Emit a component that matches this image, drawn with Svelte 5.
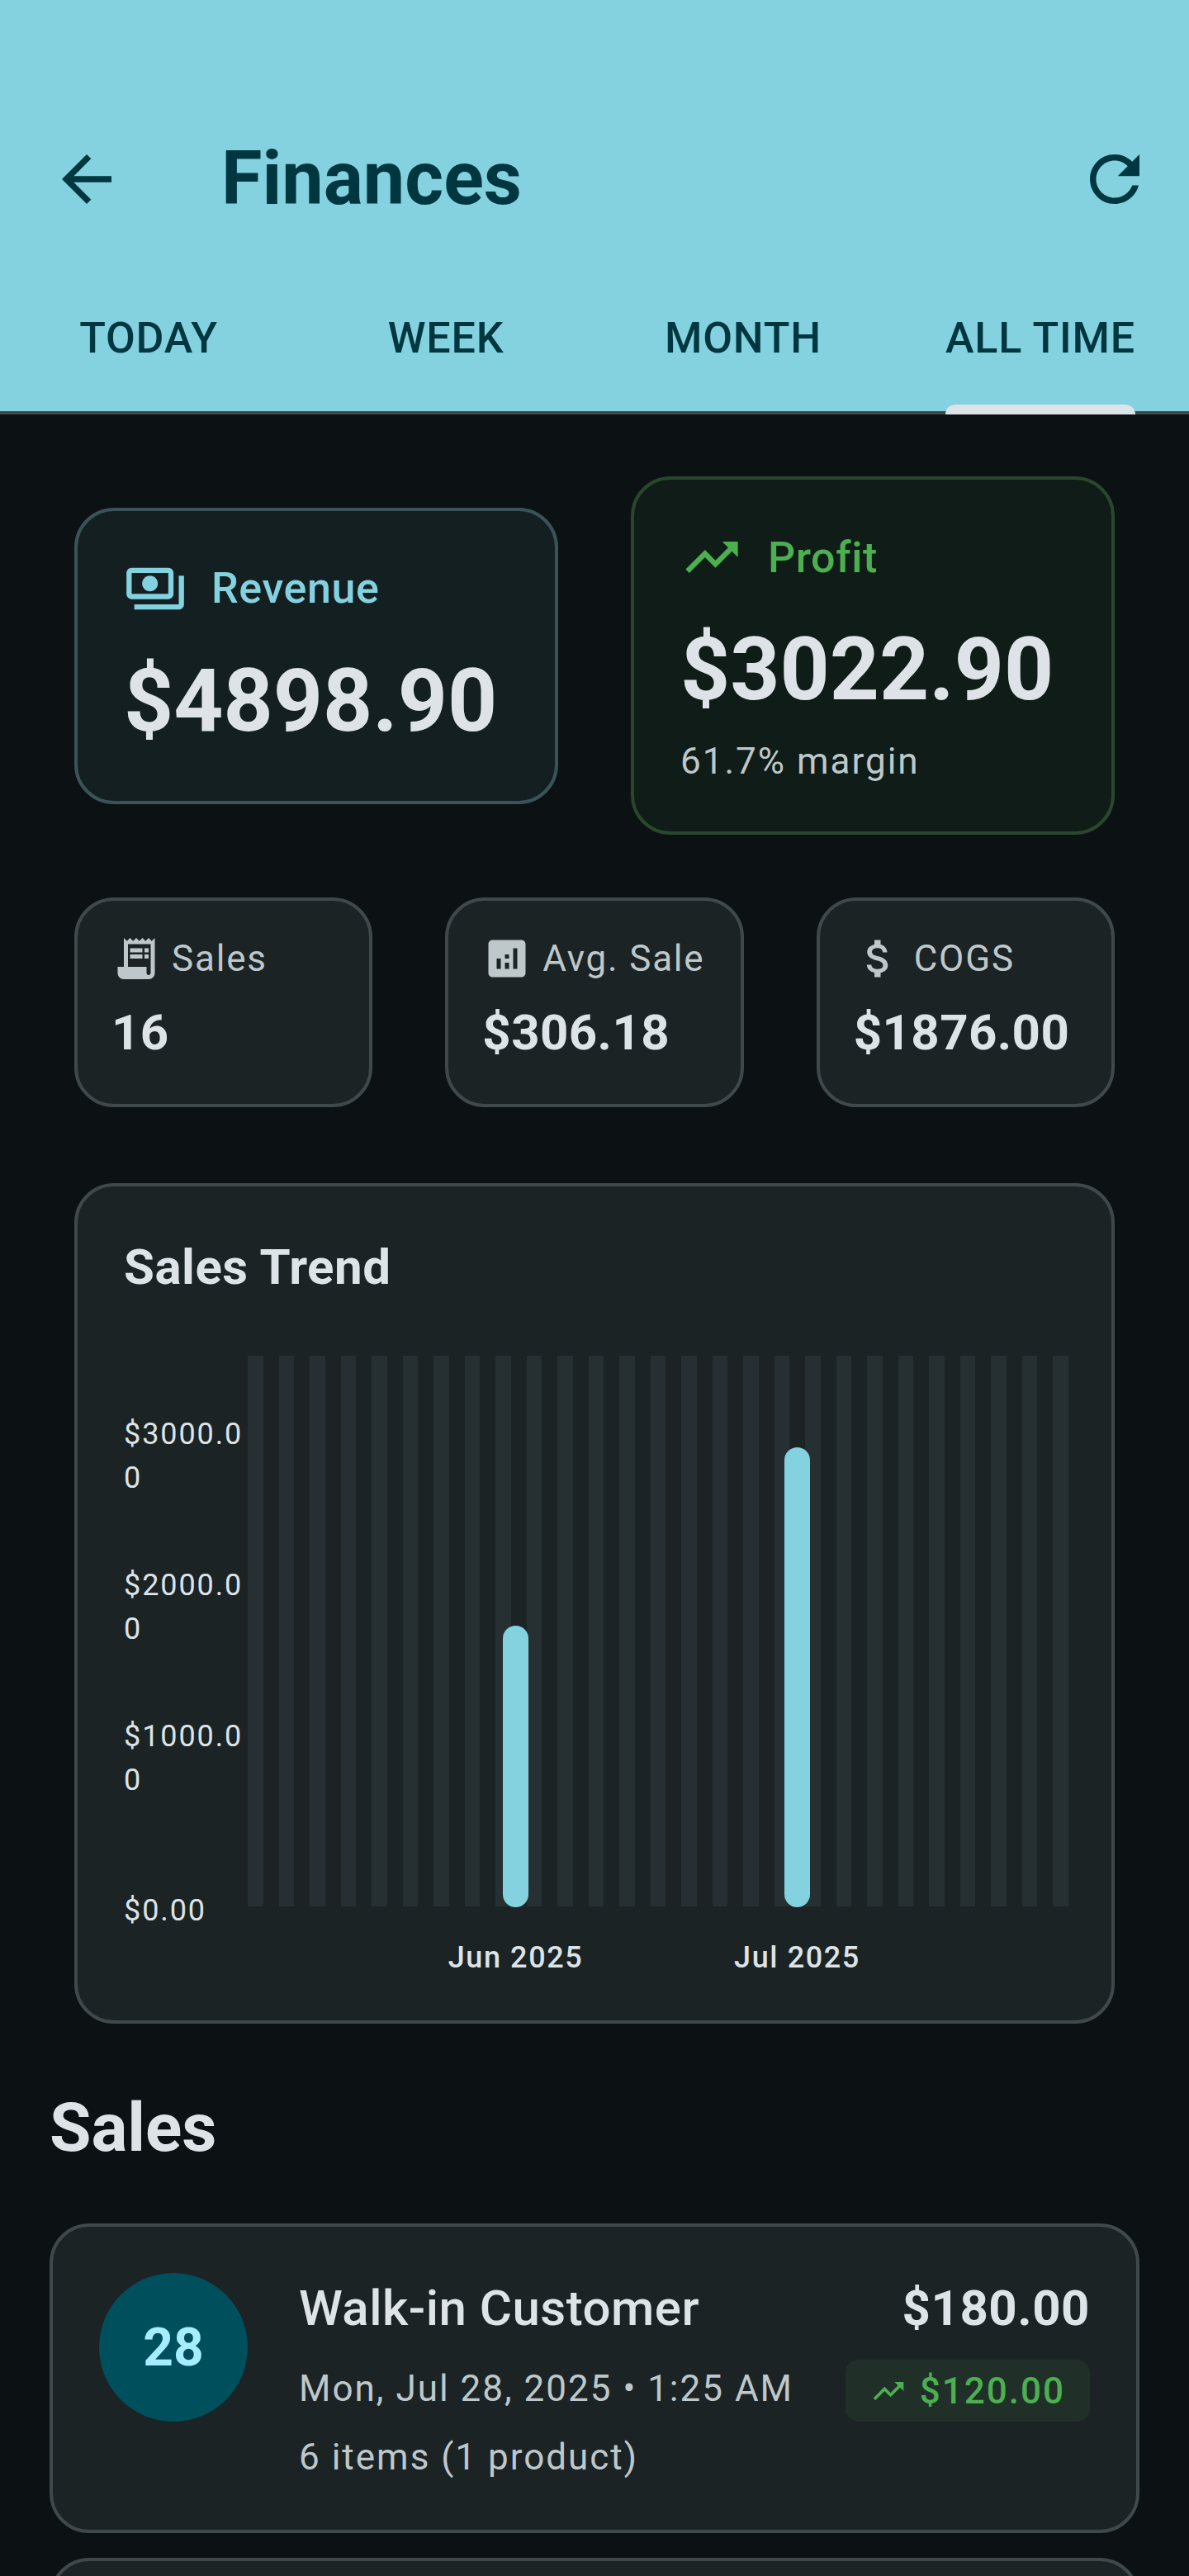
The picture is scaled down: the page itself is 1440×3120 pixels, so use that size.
<script>
  const tabs = ['TODAY', 'WEEK', 'MONTH', 'ALL TIME'];
  const stripes = Array.from({ length: 27 }, (_, i) => i);

  const stats = [
    { icon: 'receipt', label: 'Sales', value: '16' },
    { icon: 'chart', label: 'Avg. Sale', value: '$306.18' },
    { icon: 'money', label: 'COGS', value: '$1876.00' },
  ];

  // left and height in px inside the plot, the baseline is at 668
  const bars = [
    { label: 'Jun 2025', left: 309, height: 341 },
    { label: 'Jul 2025', left: 650, height: 557 },
  ];

  const paths = {
    back: 'M20 11H7.83l5.59-5.59L12 4l-8 8 8 8 1.41-1.41L7.83 13H20v-2z',
    refresh: 'M17.65 6.35C16.2 4.9 14.21 4 12 4c-4.42 0-7.99 3.58-7.99 8s3.57 8 7.99 8c3.73 0 6.84-2.55 7.73-6h-2.08c-.82 2.33-3.04 4-5.65 4-3.31 0-6-2.69-6-6s2.69-6 6-6c1.66 0 3.14.69 4.22 1.78L13 11h7V4l-2.35 2.35z',
    payments: 'M19 14V6c0-1.1-.9-2-2-2H3c-1.1 0-2 .9-2 2v8c0 1.1.9 2 2 2h14c1.1 0 2-.9 2-2zm-2 0H3V6h14v8zm-7-7c-1.66 0-3 1.34-3 3s1.34 3 3 3 3-1.34 3-3-1.34-3-3-3zm13 0v11c0 1.1-.9 2-2 2H4v-2h17V7h2z',
    trend: 'M16 6l2.29 2.29-4.88 4.88-4-4L2 16.59 3.41 18l6-6 4 4 6.3-6.29L22 12V6z',
    receipt: 'M19.5 3.5L18 2l-1.5 1.5L15 2l-1.5 1.5L12 2l-1.5 1.5L9 2 7.5 3.5 6 2v14H3v3c0 1.66 1.34 3 3 3h12c1.66 0 3-1.34 3-3V2l-1.5 1.5zM19 19c0 .55-.45 1-1 1s-1-.45-1-1v-3H8V5h11v14zM9 7h6v2H9zm7 0h2v2h-2zM9 10h6v2H9zm7 0h2v2h-2z',
    chart: 'M19 3H5c-1.1 0-2 .9-2 2v14c0 1.1.9 2 2 2h14c1.1 0 2-.9 2-2V5c0-1.1-.9-2-2-2zM9 17H7v-5h2v5zm4 0h-2v-3h2v3zm0-5h-2v-2h2v2zm4 5h-2V7h2v10z',
    money: 'M11.8 10.9c-2.27-.59-3-1.2-3-2.15 0-1.09 1.01-1.85 2.7-1.85 1.78 0 2.44.85 2.5 2.1h2.21c-.07-1.72-1.12-3.3-3.21-3.81V3h-3v2.16c-1.94.42-3.5 1.68-3.5 3.61 0 2.31 1.91 3.46 4.7 4.13 2.5.6 3 1.48 3 2.41 0 .69-.49 1.79-2.7 1.79-2.06 0-2.87-.92-2.98-2.1h-2.2c.12 2.19 1.76 3.42 3.68 3.83V21h3v-2.15c1.95-.37 3.5-1.5 3.5-3.55 0-2.84-2.43-3.81-4.7-4.4z',
  };
</script>

<div class="page">
  <header class="appbar">
    <div class="toolbar">
      <button class="icon-btn" aria-label="Back">
        <svg viewBox="0 0 24 24" width="90" height="90"><path d={paths.back} /></svg>
      </button>
      <h1>Finances</h1>
      <button class="icon-btn" aria-label="Refresh">
        <svg viewBox="0 0 24 24" width="90" height="90"><path d={paths.refresh} /></svg>
      </button>
    </div>
    <nav class="tabs">
      {#each tabs as tab, i}
        <div class="tab" class:active={i === tabs.length - 1}><span>{tab}</span></div>
      {/each}
    </nav>
  </header>

  <main>
    <section class="top-cards">
      <div class="hero revenue">
        <div class="hero-label">
          <svg viewBox="0 0 24 24" width="76" height="76"><path d={paths.payments} /></svg>
          <span>Revenue</span>
        </div>
        <div class="hero-value">$4898.90</div>
      </div>
      <div class="hero profit">
        <div class="hero-label">
          <svg viewBox="0 0 24 24" width="76" height="76"><path d={paths.trend} /></svg>
          <span>Profit</span>
        </div>
        <div class="hero-value">$3022.90</div>
        <div class="hero-note">61.7% margin</div>
      </div>
    </section>

    <section class="stats">
      {#each stats as stat}
        <div class="stat">
          <div class="stat-label">
            <svg viewBox="0 0 24 24" width="60" height="60"><path d={paths[stat.icon]} /></svg>
            <span>{stat.label}</span>
          </div>
          <div class="stat-value">{stat.value}</div>
        </div>
      {/each}
    </section>

    <section class="chart-card">
      <h2>Sales Trend</h2>
      <div class="chart">
        <div class="y-axis">
          <span>$3000.00</span>
          <span>$2000.00</span>
          <span>$1000.00</span>
          <span>$0.00</span>
        </div>
        <div class="plot">
          <div class="stripes">
            {#each stripes as s (s)}
              <i></i>
            {/each}
          </div>
          {#each bars as bar}
            <div class="bar" style="left: {bar.left}px; height: {bar.height}px"></div>
            <span class="x-label" style="left: {bar.left + 15.5}px">{bar.label}</span>
          {/each}
        </div>
      </div>
    </section>
  </main>

  <section class="sales">
    <h2>Sales</h2>
    <article class="sale">
      <div class="day">28</div>
      <div class="sale-info">
        <div class="name">Walk-in Customer</div>
        <div class="meta first">Mon, Jul 28, 2025 • 1:25 AM</div>
        <div class="meta">6 items (1 product)</div>
      </div>
      <div class="sale-nums">
        <div class="amount">$180.00</div>
        <div class="pill">
          <svg viewBox="0 0 24 24" width="44" height="44"><path d={paths.trend} /></svg>
          <span>$120.00</span>
        </div>
      </div>
    </article>
    <article class="sale"></article>
  </section>
</div>

<style>
  :global(body) {
    margin: 0;
    background: #0c1214;
  }
  .page {
    width: 1440px;
    height: 3120px;
    overflow: hidden;
    background: #0c1214;
    color: #dde3e6;
    font-family: Roboto, "Liberation Sans", sans-serif;
  }
  svg {
    fill: currentColor;
    display: block;
    flex: none;
  }

  .appbar {
    background: #84d2e0;
    color: #00363f;
    height: 502px;
    box-sizing: border-box;
    padding-top: 96px;
    border-bottom: 4px solid #3f484a;
  }
  .toolbar {
    height: 242px;
    display: flex;
    align-items: center;
    padding: 0 45px 0 60px;
  }
  .toolbar h1 {
    flex: 1;
    margin: 0 0 0 118px;
    font-size: 90px;
    font-weight: 700;
    line-height: 1;
  }
  .icon-btn {
    padding: 0;
    border: 0;
    background: none;
    color: inherit;
  }
  .tabs {
    display: grid;
    grid-template-columns: repeat(4, 1fr);
    height: 160px;
  }
  .tab {
    display: flex;
    justify-content: center;
    font-size: 52px;
    font-weight: 500;
    letter-spacing: 0.8px;
  }
  .tab span {
    position: relative;
    height: 160px;
    line-height: 143px;
  }
  .tab.active span::after {
    content: '';
    position: absolute;
    left: 0;
    right: 0;
    bottom: -4px;
    height: 12px;
    background: #dde3e6;
    border-radius: 12px 12px 0 0;
  }

  main {
    padding: 75px 90px 0;
  }
  .top-cards {
    display: flex;
    align-items: center;
    gap: 88px;
  }
  .hero {
    flex: 1;
    box-sizing: border-box;
    padding: 56px;
    border: 4px solid;
    border-radius: 48px;
  }
  .revenue {
    background: #131f20;
    border-color: #3a5358;
  }
  .profit {
    background: #101c17;
    border-color: #29472c;
  }
  .hero-label {
    display: flex;
    align-items: center;
    gap: 30px;
    font-size: 52px;
    font-weight: 500;
    letter-spacing: 0.6px;
  }
  .revenue .hero-label {
    color: #84d2e0;
  }
  .profit .hero-label {
    color: #4caf50;
  }
  .hero-value {
    font-size: 105px;
    font-weight: 700;
    line-height: 128px;
    margin-top: 35px;
  }
  .hero-note {
    font-size: 44px;
    letter-spacing: 2px;
    line-height: 58px;
    color: #bec8ca;
    margin-top: 17px;
  }

  .stats {
    display: grid;
    grid-template-columns: repeat(3, 1fr);
    gap: 88px;
    margin-top: 76px;
  }
  .stat {
    box-sizing: border-box;
    height: 254px;
    padding: 40px 0 40px 41px;
    background: #1b2325;
    border: 4px solid #3f484a;
    border-radius: 48px;
  }
  .stat-label {
    display: flex;
    align-items: center;
    gap: 13px;
    font-size: 44px;
    letter-spacing: 1.8px;
    white-space: nowrap;
    color: #bec8ca;
  }
  .stat-value {
    font-size: 60px;
    font-weight: 700;
    letter-spacing: 0.4px;
    line-height: 80px;
    margin-top: 20px;
  }

  .chart-card {
    margin-top: 92px;
    box-sizing: border-box;
    height: 1018px;
    padding: 54px 56px;
    background: #1b2325;
    border: 4px solid #3f484a;
    border-radius: 48px;
  }
  .chart-card h2 {
    margin: 0;
    font-size: 60px;
    font-weight: 700;
    letter-spacing: 0.5px;
    line-height: 88px;
  }
  .chart {
    display: flex;
    margin-top: 63px;
  }
  .y-axis {
    width: 150px;
    height: 680px;
    display: flex;
    flex-direction: column;
    padding-top: 69px;
    box-sizing: border-box;
    font-size: 36px;
    letter-spacing: 1.9px;
    line-height: 53px;
    word-break: break-all;
    flex: none;
  }
  .y-axis span {
    height: 183px;
    flex: none;
  }
  .y-axis span:last-child {
    height: 53px;
    margin-top: 28px;
  }
  .plot {
    position: relative;
    flex: 1;
    height: 760px;
  }
  .stripes {
    display: flex;
    gap: 19px;
    height: 667px;
  }
  .stripes i {
    width: 18.5px;
    flex: none;
    background: #262f31;
  }
  .bar {
    position: absolute;
    bottom: 92px;
    width: 31px;
    background: #84d2e0;
    border-radius: 16px;
  }
  .x-label {
    position: absolute;
    top: 708px;
    transform: translateX(-50%);
    font-size: 36px;
    font-weight: 500;
    letter-spacing: 1.6px;
    white-space: nowrap;
  }

  .sales {
    padding: 0 60px;
  }
  .sales h2 {
    margin: 76px 0 66px;
    font-size: 82px;
    font-weight: 700;
    line-height: 100px;
  }
  .sale {
    box-sizing: border-box;
    height: 375px;
    display: flex;
    align-items: flex-start;
    gap: 62px;
    padding: 56px;
    background: #1b2325;
    border: 4px solid #3f484a;
    border-radius: 48px;
  }
  .sale + .sale {
    margin-top: 30px;
  }
  .day {
    width: 180px;
    height: 180px;
    flex: none;
    border-radius: 50%;
    display: flex;
    align-items: center;
    justify-content: center;
    background: #004f5d;
    color: #a6eeff;
    font-size: 64px;
    font-weight: 700;
  }
  .sale-info {
    flex: 1;
  }
  .name {
    font-size: 60px;
    font-weight: 500;
    letter-spacing: 0.5px;
    line-height: 86px;
  }
  .meta {
    font-size: 44px;
    letter-spacing: 2px;
    line-height: 83px;
    color: #bec8ca;
    white-space: nowrap;
  }
  .meta.first {
    margin-top: 13px;
  }
  .sale-nums {
    display: flex;
    flex-direction: column;
    align-items: flex-end;
    gap: 19px;
  }
  .amount {
    font-size: 60px;
    font-weight: 700;
    letter-spacing: 0.5px;
    line-height: 86px;
  }
  .pill {
    display: flex;
    align-items: center;
    gap: 16px;
    height: 75px;
    padding: 0 30px;
    border-radius: 16px;
    background: #212f29;
    color: #4caf50;
    font-size: 44px;
    font-weight: 500;
    letter-spacing: 2px;
  }
</style>
